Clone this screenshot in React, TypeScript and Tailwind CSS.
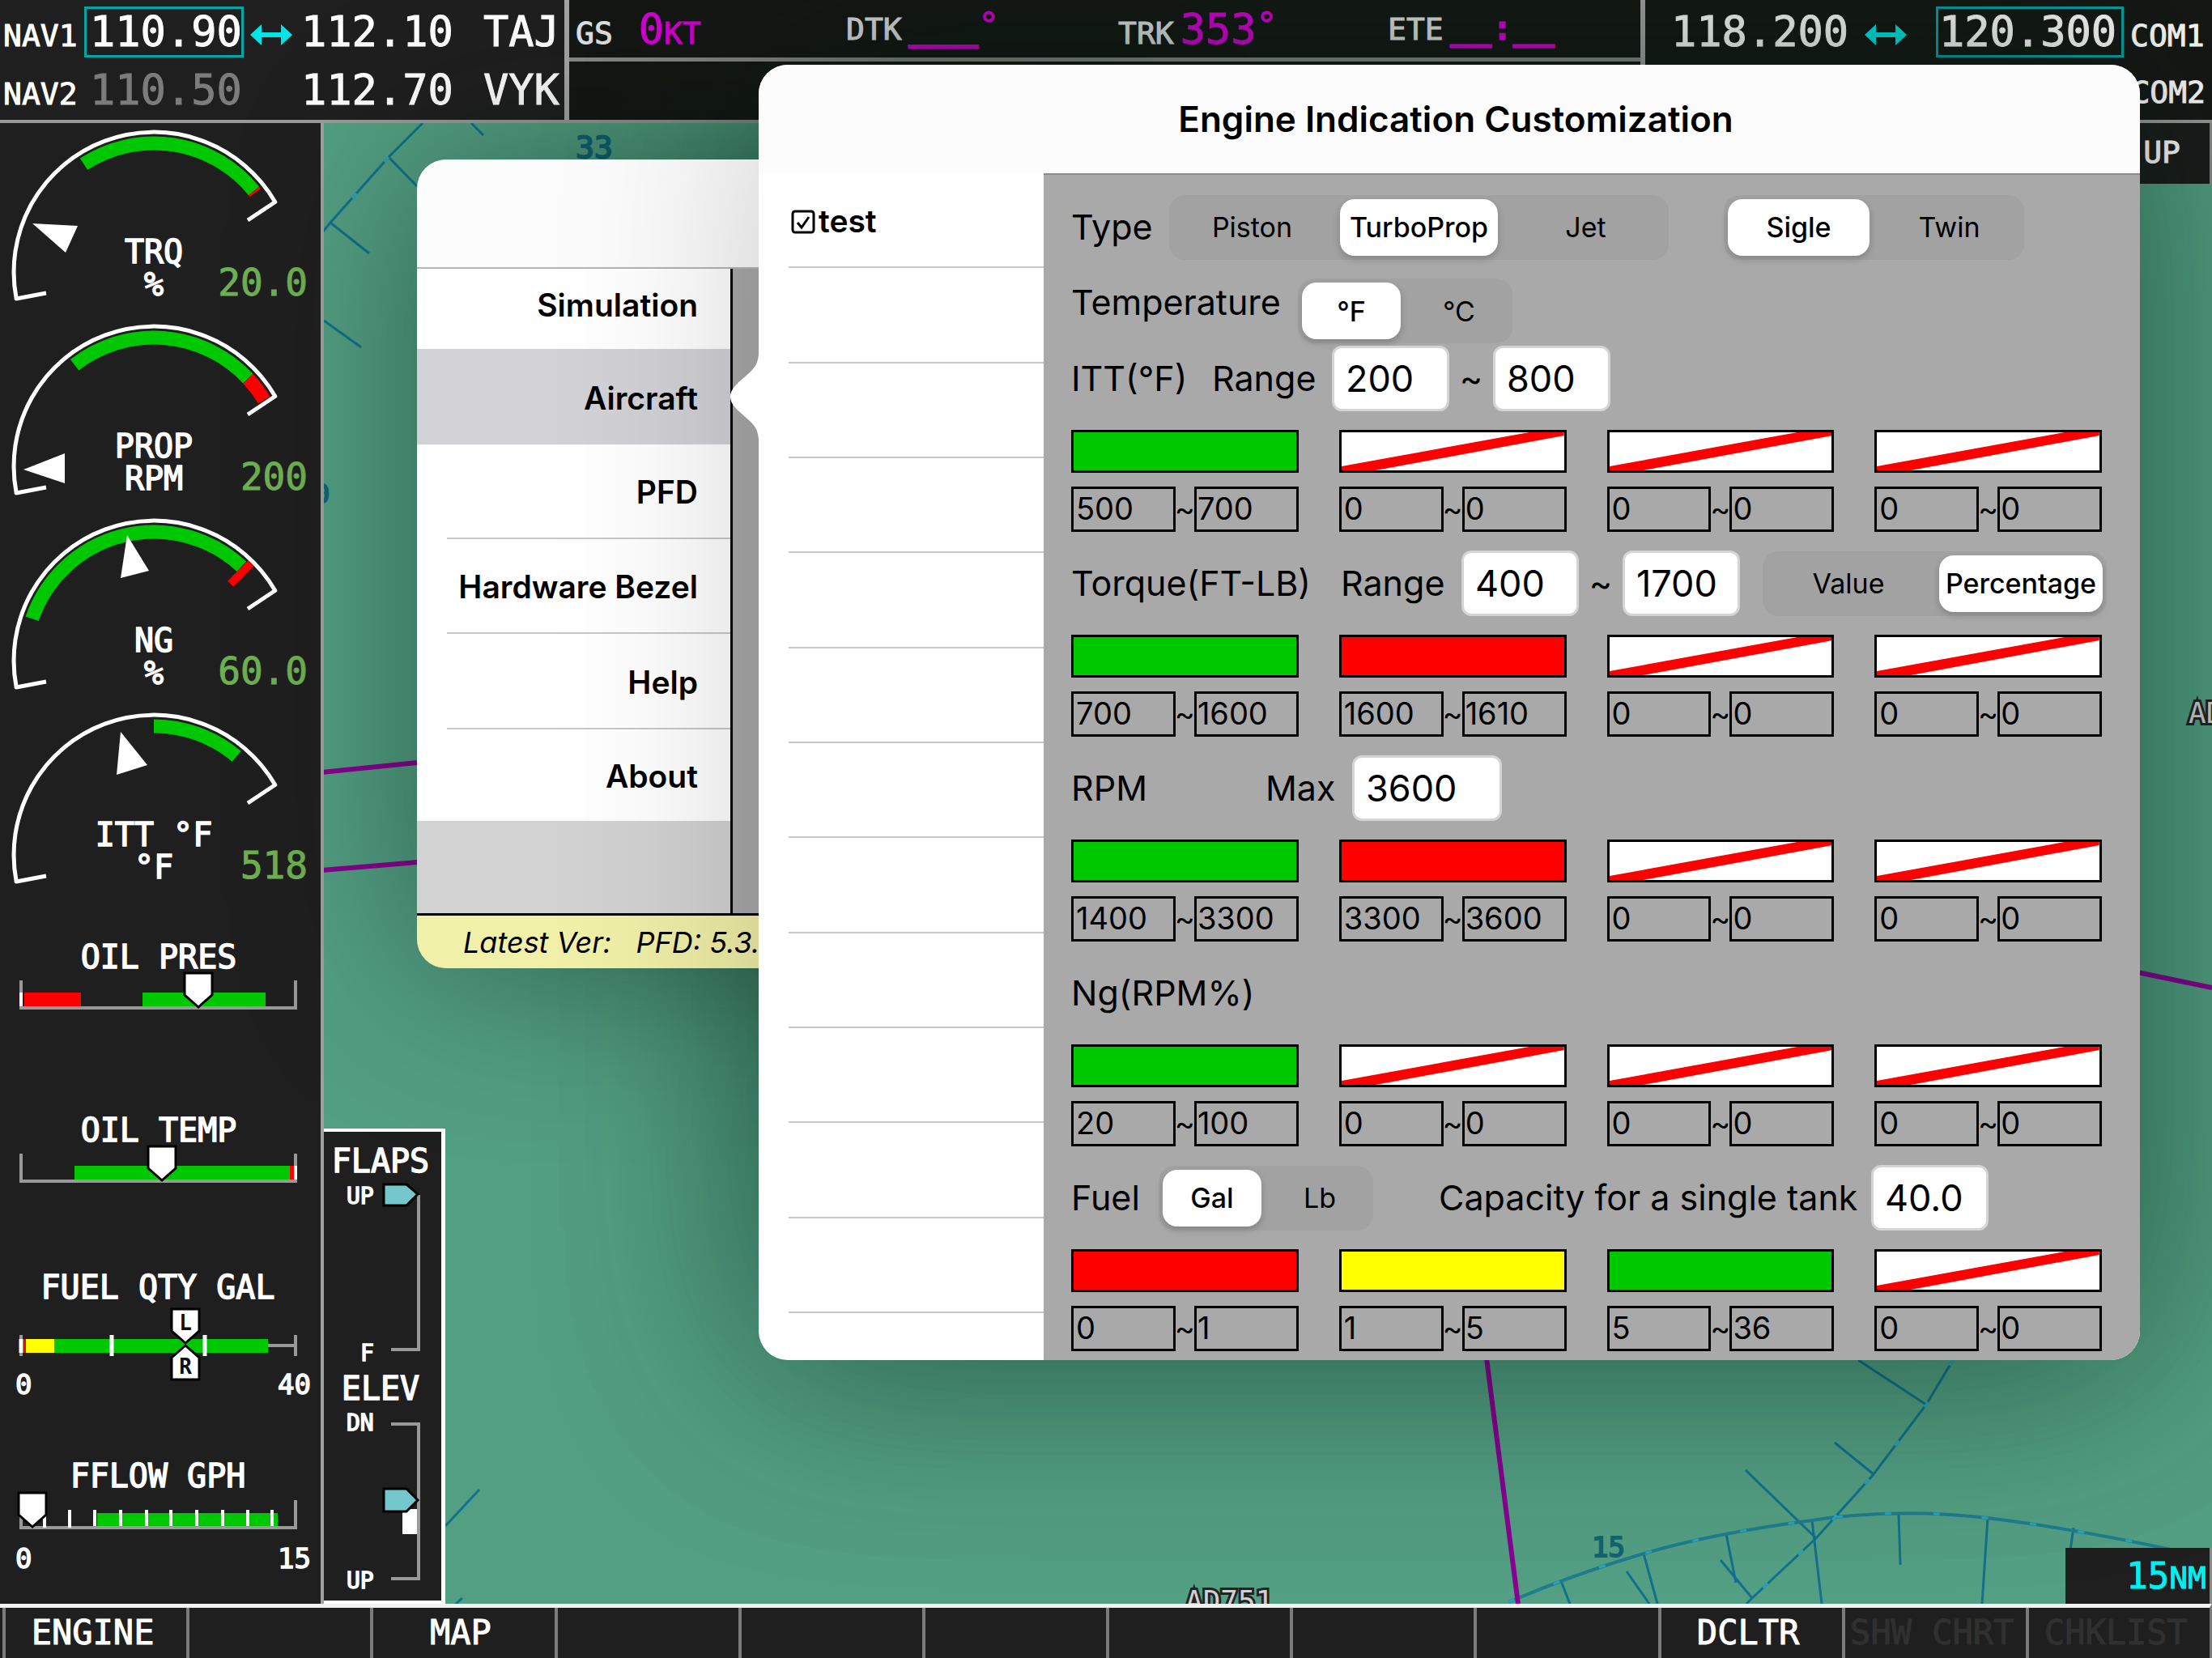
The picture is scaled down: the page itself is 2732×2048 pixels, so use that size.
import { useState } from 'react';
import type { ReactNode } from 'react';
import clsx from 'clsx';

type Swatch = 'green' | 'red' | 'yellow' | 'none';

interface RangeBand {
    color: Swatch;
    from: string;
    to: string;
}

interface Band {
    from: number;
    to: number;
    color: string;
}

const GREEN = '#00c800';
const RED = '#ff0000';
const YELLOW = '#ffff00';

const NONE: RangeBand = { color: 'none', from: '0', to: '0' };

const ITT_BANDS: RangeBand[] = [{ color: 'green', from: '500', to: '700' }, NONE, NONE, NONE];
const TORQUE_BANDS: RangeBand[] = [
    { color: 'green', from: '700', to: '1600' },
    { color: 'red', from: '1600', to: '1610' },
    NONE,
    NONE,
];
const RPM_BANDS: RangeBand[] = [
    { color: 'green', from: '1400', to: '3300' },
    { color: 'red', from: '3300', to: '3600' },
    NONE,
    NONE,
];
const NG_BANDS: RangeBand[] = [{ color: 'green', from: '20', to: '100' }, NONE, NONE, NONE];
const FUEL_BANDS: RangeBand[] = [
    { color: 'red', from: '0', to: '1' },
    { color: 'yellow', from: '1', to: '5' },
    { color: 'green', from: '5', to: '36' },
    NONE,
];

const SOFTKEYS = [
    { label: 'ENGINE' },
    { label: '' },
    { label: 'MAP' },
    { label: '' },
    { label: '' },
    { label: '' },
    { label: '' },
    { label: '' },
    { label: '' },
    { label: 'DCLTR' },
    { label: 'SHW CHRT', disabled: true },
    { label: 'CHKLIST', disabled: true },
];

const MENU = ['Simulation', 'Aircraft', 'PFD', 'Hardware Bezel', 'Help', 'About'];

export default function App() {
    return (
        <div className="relative flex min-h-screen w-full flex-col overflow-hidden bg-[#1f1f1f] font-['DejaVu_Sans_Mono',monospace] text-white">
            <TopBar />
            <main className="flex flex-1">
                <EngineStrip />
                <MapArea />
            </main>
            <SoftkeyBar />
            {/* soft shade the dialog casts on the map, kept under the menu */}
            <div className="pointer-events-none absolute top-20 right-[89px] left-[937px] h-[1600px] rounded-[36px] shadow-[0_0_280px_rgba(0,40,25,0.4)]" />
            <SettingsMenu />
            <CustomizationPopover />
        </div>
    );
}

/* ---------- top bar ---------- */

function SwapArrow() {
    return (
        <svg viewBox="0 0 52 28" className="h-7 w-[52px] shrink-0 self-center" aria-hidden="true">
            <path d="M10 14H42" stroke="#00e5e5" strokeWidth="6" />
            <path d="M0 14L14 1V27ZM52 14L38 1V27Z" fill="#00e5e5" />
        </svg>
    );
}

function TopBar() {
    return (
        <header className="flex h-[152px] border-b-4 border-[#9a9a9a] text-[52px] [-webkit-text-stroke:1px_currentColor]">
            <div className="flex w-[703px] shrink-0 flex-col border-r-6 border-[#a6a6a6] pt-2">
                <div className="flex h-[69px] items-baseline leading-[57px]">
                    <span className="w-[104px] pl-1 text-[38px]">NAV1</span>
                    <span className="w-[197px] border-3 border-[#00a5a8] pl-1">110.90</span>
                    <span className="flex w-[67px] justify-center self-center">
                        <SwapArrow />
                    </span>
                    <span className="w-[229px] pl-1">112.10</span>
                    <span>TAJ</span>
                </div>
                <div className="flex h-[69px] items-baseline leading-[69px]">
                    <span className="w-[104px] pl-1 text-[38px]">NAV2</span>
                    <span className="w-[264px] pl-[7px] text-[#7c7c7c]">110.50</span>
                    <span className="w-[229px] pl-1">112.70</span>
                    <span>VYK</span>
                </div>
            </div>
            <div className="flex-1 bg-[#161815]">
                <div className="grid h-[76px] grid-cols-[334px_336px_333px_1fr] border-b-5 border-[#8a8a8a] pt-2 pl-2">
                    <Readout label="GS">
                        <span className="ml-6">0</span>
                        <span className="text-[38px]">KT</span>
                    </Readout>
                    <Readout label="DTK">
                        <span className="self-start text-[48px] leading-[48px] font-bold">___</span>
                        <span className="self-start text-[43px] leading-[46px]">°</span>
                    </Readout>
                    <Readout label="TRK">
                        <span>353</span>
                        <span className="self-start text-[43px] leading-[46px]">°</span>
                    </Readout>
                    <Readout label="ETE">
                        <span className="self-start text-[43px] leading-[48px] font-bold">__:__</span>
                    </Readout>
                </div>
            </div>
            <div className="w-[706px] shrink-0 border-l-6 border-[#a6a6a6] bg-[#161815] pt-2 pl-8">
                <div className="flex h-[69px] items-baseline leading-[57px]">
                    <span className="w-[239px]">118.200</span>
                    <span className="flex w-[88px] self-center">
                        <SwapArrow />
                    </span>
                    <span className="w-[232px] border-3 border-[#00a5a8] pl-px">120.300</span>
                    <span className="pl-2 text-[38px]">COM1</span>
                </div>
                <div className="pr-2 text-right text-[38px] leading-[75px]">COM2</div>
            </div>
        </header>
    );
}

function Readout({ label, children }: { label: string; children: ReactNode }) {
    return (
        <div className="flex items-baseline leading-[57px] whitespace-nowrap">
            <span className="pr-2 text-[38px] text-[#e4e4e4]">{label}</span>
            <span className="flex items-baseline text-[#d800d8]">{children}</span>
        </div>
    );
}

/* ---------- engine strip ---------- */

const CX = 190;
const CY = 184;

function polar(r: number, deg: number) {
    const a = (deg * Math.PI) / 180;
    return `${(CX + r * Math.sin(a)).toFixed(1)} ${(CY - r * Math.cos(a)).toFixed(1)}`;
}

function arc(r: number, from: number, to: number) {
    return `M${polar(r, from)}A${r} ${r} 0 ${to - from > 180 ? 1 : 0} 1 ${polar(r, to)}`;
}

interface DialProps {
    lines: [string, string];
    value: string;
    bands: Band[];
    needle: string;
    redTick?: number;
}

function Dial({ lines, value, bands, needle, redTick }: DialProps) {
    return (
        <svg viewBox="0 0 396 240" className="h-[240px] w-full shrink-0" role="img" aria-label={lines[0]}>
            {bands.map((b) => (
                <path key={b.from} d={arc(159, b.from, b.to)} fill="none" stroke={b.color} strokeWidth="17" />
            ))}
            {redTick !== undefined && (
                <path d={`M${polar(134, redTick)}L${polar(170, redTick)}`} stroke={RED} strokeWidth="10" />
            )}
            <path
                d={`M57 210L20 217${arc(173, -101, 60).replace('M', 'L')}L306 120`}
                fill="none"
                stroke="#fff"
                strokeWidth="5"
                strokeLinejoin="round"
            />
            <polygon points={needle} fill="#fff" />
            <Label x={190} y={173} anchor="middle">
                {lines[0]}
            </Label>
            <Label x={190} y={213} anchor="middle">
                {lines[1]}
            </Label>
            <text x="380" y="213" textAnchor="end" fontSize="46" fill="#6fb052" stroke="#6fb052" strokeWidth="1">
                {value}
            </text>
        </svg>
    );
}

interface LabelProps {
    x: number;
    y: number;
    size?: number;
    anchor?: 'start' | 'middle' | 'end';
    children: string;
}

function Label({ x, y, size = 40, anchor = 'start', children }: LabelProps) {
    return (
        <text x={x} y={y} textAnchor={anchor} fontSize={size} fill="#fff" stroke="#fff" strokeWidth="1.5">
            {children}
        </text>
    );
}

function Pointer({ x, y, flip, label }: { x: number; y: number; flip?: boolean; label?: string }) {
    const s = flip ? -1 : 1;
    return (
        <g>
            <path
                d={`M${x} ${y}L${x - 17} ${y - 15 * s}V${y - 42 * s}H${x + 17}V${y - 15 * s}Z`}
                fill="#fff"
                stroke="#000"
                strokeWidth="3"
            />
            {label && (
                <text x={x} y={flip ? y + 35 : y - 16} textAnchor="middle" fontSize="26" fontWeight="bold" fill="#111">
                    {label}
                </text>
            )}
        </g>
    );
}

const FRAME = 'M26 99V133H365V99';

function EngineStrip() {
    return (
        <aside className="flex w-[400px] shrink-0 flex-col border-r-4 border-[#a0a0a0] bg-[#1f1f1f]">
            <Dial
                lines={['TRQ', '%']}
                value="20.0"
                bands={[
                    { from: -33, to: 51, color: GREEN },
                    { from: 51, to: 52, color: RED },
                ]}
                needle="40,124 96,127 81,160"
            />
            <Dial
                lines={['PROP', 'RPM']}
                value="200"
                bands={[
                    { from: -38, to: 47, color: GREEN },
                    { from: 47, to: 59, color: RED },
                ]}
                needle="29,188 80,168 80,205"
            />
            <Dial
                lines={['NG', '%']}
                value="60.0"
                bands={[{ from: -71, to: 43, color: GREEN }]}
                redTick={45}
                needle="157,29 149,82 184,73"
            />
            <Dial
                lines={['ITT °F', '°F']}
                value="518"
                bands={[{ from: 0, to: 40, color: GREEN }]}
                needle="149,32 144,85 182,73"
            />

            <svg viewBox="0 0 396 214" className="h-[214px] w-full shrink-0" role="img" aria-label="Oil pressure">
                <Label x={196} y={84} anchor="middle">
                    OIL PRES
                </Label>
                <path d="M30 114H100V131H30Z" fill={RED} />
                <path d="M176 114H328V131H176Z" fill={GREEN} />
                <path d={FRAME} fill="none" stroke="#999" strokeWidth="4" />
                <path d="M26 114V131" stroke="#fff" strokeWidth="4" />
                <Pointer x={245} y={132} />
            </svg>
            <svg viewBox="0 0 396 214" className="h-[214px] w-full shrink-0" role="img" aria-label="Oil temperature">
                <Label x={196} y={84} anchor="middle">
                    OIL TEMP
                </Label>
                <path d="M92 114H358V131H92Z" fill={GREEN} />
                <path d="M358 114H363V131H358Z" fill={RED} />
                <path d={FRAME} fill="none" stroke="#999" strokeWidth="4" />
                <path d="M365 114V131" stroke="#fff" strokeWidth="4" />
                <Pointer x={200} y={132} />
            </svg>
            <svg viewBox="0 0 396 214" className="h-[214px] w-full shrink-0" role="img" aria-label="Fuel quantity">
                <Label x={195} y={64} anchor="middle">
                    FUEL QTY GAL
                </Label>
                <path d="M30 122H365M26 109V135M365 109V135" stroke="#999" strokeWidth="4" />
                <path d="M29 114H33V131H29Z" fill={RED} />
                <path d="M32 114H67V131H32Z" fill={YELLOW} />
                <path d="M67 114H331V131H67Z" fill={GREEN} />
                <path d="M26 114V131M138 109V135M253 109V135" stroke="#fff" strokeWidth="5" />
                <Pointer x={229} y={119} label="L" />
                <Pointer x={229} y={122} flip label="R" />
                <Label x={19} y={182} size={34}>
                    0
                </Label>
                <Label x={384} y={182} size={34} anchor="end">
                    40
                </Label>
            </svg>
            <svg viewBox="0 0 396 227" className="h-[227px] w-full shrink-0" role="img" aria-label="Fuel flow">
                <Label x={195} y={83} anchor="middle">
                    FFLOW GPH
                </Label>
                <path d="M120 115H343V132H120Z" fill={GREEN} />
                <path d={FRAME} fill="none" stroke="#999" strokeWidth="4" />
                <path
                    d="M55 111V133M86 111V133M117 111V131M149 111V131M181 111V131M211 111V131M243 111V131M275 111V131M306 111V131M336 111V131"
                    stroke="#fff"
                    strokeWidth="4"
                />
                <Pointer x={40} y={132} />
                <Label x={19} y={183} size={34}>
                    0
                </Label>
                <Label x={384} y={183} size={34} anchor="end">
                    15
                </Label>
            </svg>
        </aside>
    );
}

/* ---------- map ---------- */

function FlapsPanel() {
    return (
        <div className="relative h-[587px] w-[150px] self-end border-y-4 border-r-5 border-white bg-[#1f1f1f]">
            <svg viewBox="0 4 145 579" className="size-full" role="img" aria-label="Flaps and elevator trim">
                <Label x={70} y={54} anchor="middle">
                    FLAPS
                </Label>
                <Label x={28} y={93} size={28}>
                    UP
                </Label>
                <path d="M83 273H117V82" fill="none" stroke="#999" strokeWidth="4" />
                <path d="M74 69H102L116 81L102 95H74Z" fill="#74c8cc" stroke="#000" strokeWidth="3" />
                <Label x={45} y={287} size={28}>
                    F
                </Label>
                <Label x={70} y={335} anchor="middle">
                    ELEV
                </Label>
                <Label x={28} y={373} size={28}>
                    DN
                </Label>
                <path d="M83 365H117V556H83" fill="none" stroke="#999" strokeWidth="4" />
                <path d="M97 470H115V501H97Z" fill="#fff" />
                <path d="M74 445H102L116 459L102 473H74Z" fill="#74c8cc" stroke="#000" strokeWidth="3" />
                <Label x={28} y={568} size={28}>
                    UP
                </Label>
            </svg>
        </div>
    );
}

function MapArea() {
    return (
        <section className="relative flex flex-1 justify-between bg-[#539f83]" aria-label="Map">
            <svg
                viewBox="400 152 2332 1829"
                preserveAspectRatio="xMinYMax slice"
                className="absolute inset-0 size-full"
                aria-hidden="true"
            >
                <g stroke="#14708c" strokeWidth="3" fill="none">
                    <path d="M522 152L480 194L408 275L399 286" />
                    <path d="M480 194L515 230M408 275L456 313M582 152L597 167M400 396L446 429" />
                    <path d="M592 1840L550 1885M571 1974L560 1984" />
                    <path d="M2412 1680L2379 1735L2314 1821L2243 1900L2164 1974L2157 1981" />
                    <path d="M2379 1735L2295 1680M2314 1821L2266 1782M2243 1900L2156 1816M2164 1974L2125 1927M2037 1981L2009 1941" />
                    <path d="M1939 1981L1928 1953M2047 1981L2030 1919M2144 1955L2132 1895M2250 1981L2238 1878M2347 1933L2345 1871M2448 1981L2455 1875M2557 1915L2561 1887" />
                    <path
                        d="M1863 1979Q1945 1944 2030 1919T2238 1878Q2345 1862 2454 1875T2700 1918"
                        stroke="#1f7d8f"
                        strokeWidth="4"
                    />
                </g>
                <g stroke="#2aa5c0" strokeWidth="3" strokeDasharray="8 52" fill="none">
                    <path d="M480 194L408 275M2412 1680L2379 1735L2314 1821L2243 1900L2164 1974" />
                    <path d="M1863 1979Q1945 1944 2030 1919T2238 1878Q2345 1862 2454 1875T2700 1918" />
                </g>
                <g stroke="#8a0092" strokeWidth="6">
                    <path d="M398 954L515 942M398 1075L515 1065M2640 1201L2732 1220M1836 1678L1875 1981" />
                </g>
                <g fill="#146476" stroke="#146476" strokeWidth="2">
                    <text x="711" y="195" fontSize="38">
                        33
                    </text>
                    <text x="388" y="621" fontSize="32">
                        0
                    </text>
                    <text x="1966" y="1923" fontSize="34">
                        15
                    </text>
                </g>
                <g fontSize="36" fill="#d0d0d0" stroke="#222" strokeWidth="6" paintOrder="stroke">
                    <text x="2703" y="893">
                        AD
                    </text>
                    <text x="1464" y="1990">
                        AD751
                    </text>
                </g>
            </svg>
            <FlapsPanel />
            <div className="relative flex flex-col items-end justify-between">
                <div className="h-[75px] w-[140px] border-r-3 border-[#8a8a8a] bg-[#1b1c1b] pr-9 text-right text-[38px] leading-[72px] [-webkit-text-stroke:1px_currentColor]">
                    UP
                </div>
                <div className="h-[69px] w-[181px] border-r-3 border-[#8a8a8a] bg-[#1f1f1f] pr-1 text-right text-[44px] leading-[69px] text-[#00f0f0] [-webkit-text-stroke:1px_currentColor]">
                    15<span className="text-[38px]">NM</span>
                </div>
            </div>
        </section>
    );
}

function SoftkeyBar() {
    return (
        <nav className="relative grid h-[67px] grid-cols-12 border-t-5 border-r-3 border-t-[#f2f2f2] border-r-[#7b7b7b] bg-[#1f1f1f] pl-[3px]">
            {SOFTKEYS.map((k, i) => (
                <button
                    key={i}
                    type="button"
                    disabled={k.disabled}
                    aria-label={k.label || `Softkey ${i + 1}`}
                    className={clsx(
                        'min-w-0 border-l-4 border-[#7b7b7b] pr-2 text-[42px] leading-none whitespace-nowrap [-webkit-text-stroke:1px_currentColor]',
                        k.disabled ? 'text-[#303030]' : 'text-white',
                    )}
                >
                    {k.label}
                </button>
            ))}
        </nav>
    );
}

/* ---------- settings menu ---------- */

function SettingsMenu() {
    return (
        <div className="absolute top-[197px] left-[515px] flex h-[999px] w-[860px] flex-col overflow-hidden rounded-[36px] bg-[#a9a9a9] font-[Inter,sans-serif] text-black shadow-[0_0_220px_rgba(0,20,12,0.45)]">
            <div className="h-[135px] border-b-2 border-[#b5b5b5] bg-[#fdfcfc]" />
            <div className="flex flex-1">
                <nav className="grid w-[390px] grid-rows-[99px_118px_117px_117px_118px_113px_1fr] border-r-3 border-black bg-[#d2d2d2]">
                    {MENU.map((item, i) => (
                        <button
                            key={item}
                            type="button"
                            className={clsx(
                                'flex pl-[37px] text-[39px] font-semibold',
                                i === 0 && 'pb-3',
                                item === 'Aircraft' ? 'bg-[#d1d1d6]' : 'bg-white',
                            )}
                        >
                            <span
                                className={clsx(
                                    'flex h-full flex-1 items-center justify-end pt-1 pr-10 whitespace-nowrap',
                                    i > 1 && i < 5 && 'border-b-2 border-[#c8c8c8]',
                                )}
                            >
                                {item}
                            </span>
                        </button>
                    ))}
                </nav>
            </div>
            <footer className="flex h-[68px] items-center border-t-3 border-black bg-[#f1f0a8] pl-[57px] text-[36px] whitespace-pre italic">
                {'Latest Ver:   PFD: 5.3.'}
            </footer>
        </div>
    );
}

/* ---------- engine customization ---------- */

interface SegmentedProps {
    label: string;
    options: string[];
    initial: string;
    className: string;
}

function Segmented({ label, options, initial, className }: SegmentedProps) {
    const [selected, setSelected] = useState(initial);
    return (
        <div
            role="group"
            aria-label={label}
            className={clsx(
                'grid h-20 auto-cols-fr grid-flow-col gap-[11px] rounded-[20px] bg-[#a2a2a2] p-[5px]',
                className,
            )}
        >
            {options.map((o) => (
                <button
                    key={o}
                    type="button"
                    aria-pressed={o === selected}
                    onClick={() => setSelected(o)}
                    className={clsx(
                        'flex min-w-0 items-center justify-center rounded-[18px] text-[34px] whitespace-nowrap',
                        o === selected && 'bg-white font-medium shadow-[0_4px_10px_rgba(0,0,0,0.2)]',
                    )}
                >
                    {o}
                </button>
            ))}
        </div>
    );
}

function BigInput({ label, value, className }: { label: string; value: string; className: string }) {
    return (
        <input
            aria-label={label}
            defaultValue={value}
            className={clsx('h-[81px] rounded-xl border-3 border-[#d4d4d4] bg-white pl-[14px] text-[45px]', className)}
        />
    );
}

function BandEditor({ name, bands }: { name: string; bands: RangeBand[] }) {
    return (
        <div className="mt-[23px] mb-6 grid grid-cols-4 gap-x-[50px]">
            {bands.map((b, i) => (
                <div key={i} className="flex flex-col gap-4">
                    <button
                        type="button"
                        aria-label={`${name} band ${i + 1} color`}
                        className={clsx(
                            'block h-[53px] w-full border-3 border-black',
                            b.color === 'green' && 'bg-[#00c800]',
                            b.color === 'red' && 'bg-[#ff0000]',
                            b.color === 'yellow' && 'bg-[#ffff00]',
                            b.color === 'none' && 'bg-white',
                        )}
                    >
                        {b.color === 'none' && (
                            <svg viewBox="0 0 275 47" preserveAspectRatio="none" className="size-full" aria-hidden="true">
                                <path d="M0 47V42L232 0H275V4L42 47Z" fill="#f00" />
                            </svg>
                        )}
                    </button>
                    <div className="grid h-14 grid-cols-[1fr_23px_1fr] items-center">
                        <input
                            aria-label={`${name} band ${i + 1} from`}
                            defaultValue={b.from}
                            className="h-14 w-full min-w-0 border-3 border-black bg-transparent pl-[3px] text-[38px]"
                        />
                        <span className="flex justify-center text-[38px]">~</span>
                        <input
                            aria-label={`${name} band ${i + 1} to`}
                            defaultValue={b.to}
                            className="h-14 w-full min-w-0 border-3 border-black bg-transparent pl-px text-[38px]"
                        />
                    </div>
                </div>
            ))}
        </div>
    );
}

function Row({ children }: { children: ReactNode }) {
    return <div className="flex h-[81px] items-center whitespace-nowrap [&>*]:shrink-0">{children}</div>;
}

function CustomizationPopover() {
    return (
        <div className="absolute top-20 right-[89px] left-[937px] rounded-[36px] font-[Inter,sans-serif] text-black shadow-[0_0_280px_rgba(0,0,0,0.2)]">
            <svg viewBox="0 0 36 132" className="absolute top-[344px] -left-[35px] h-[132px] w-9" aria-hidden="true">
                <path
                    d="M36 0V132C35 112 34 106 26 98C14 86 0 78 0 66C0 54 14 46 26 34C34 26 35 20 36 0Z"
                    fill="#fff"
                />
            </svg>
            <div className="relative overflow-hidden rounded-[36px] bg-white" role="dialog" aria-labelledby="dlg-title">
                <h1
                    id="dlg-title"
                    className="flex h-[134px] items-center justify-center bg-[#fcfcfc] pl-4 text-[44px] font-semibold"
                >
                    Engine Indication Customization
                </h1>
                <div className="flex h-[1466px]">
                    <ul className="grid h-[1408px] w-[352px] shrink-0 grid-rows-12 bg-white pl-[37px]">
                        <li className="flex items-center border-b-2 border-[#c8c8c8] pt-1 pl-[3px]">
                            <label className="flex items-center gap-1 text-[39px] font-semibold">
                                <input type="checkbox" defaultChecked className="sr-only" />
                                <svg viewBox="0 0 30 30" className="size-[30px]" aria-hidden="true">
                                    <rect x="2" y="2" width="26" height="26" rx="3" fill="none" stroke="#000" strokeWidth="3" />
                                    <path d="M8 16L13 22L22 9" fill="none" stroke="#000" strokeWidth="3" />
                                </svg>
                                test
                            </label>
                        </li>
                        {Array.from({ length: 11 }, (_, i) => (
                            <li key={i} className="border-b-2 border-[#c8c8c8]" />
                        ))}
                    </ul>
                    <form className="min-w-0 flex-1 border-t-2 border-[#8c8c8c] bg-[#a9a9a9] pt-6 pr-[47px] pl-[34px] text-[43px]">
                        <Row>
                            <span className="w-[121px]">Type</span>
                            <Segmented
                                label="Type"
                                options={['Piston', 'TurboProp', 'Jet']}
                                initial="TurboProp"
                                className="w-[617px]"
                            />
                            <span className="w-[68px]" />
                            <Segmented label="Engines" options={['Sigle', 'Twin']} initial="Sigle" className="w-[371px]" />
                        </Row>
                        <div className="mt-[23px] flex h-[83px] items-start whitespace-nowrap">
                            <span className="w-[280px] leading-[58px]">Temperature</span>
                            <Segmented label="Temperature" options={['°F', '°C']} initial="°F" className="w-[265px]" />
                        </div>
                        <Row>
                            <span className="w-[174px]">ITT(°F)</span>
                            <span className="w-[148px]">Range</span>
                            <BigInput label="ITT range from" value="200" className="w-[145px]" />
                            <span className="flex w-[54px] justify-center">~</span>
                            <BigInput label="ITT range to" value="800" className="w-[145px]" />
                        </Row>
                        <BandEditor name="ITT" bands={ITT_BANDS} />
                        <Row>
                            <span className="w-[333px]">Torque(FT-LB)</span>
                            <span className="w-[149px]">Range</span>
                            <BigInput label="Torque range from" value="400" className="w-[145px]" />
                            <span className="flex w-[54px] justify-center">~</span>
                            <BigInput label="Torque range to" value="1700" className="w-[145px]" />
                            <span className="w-7" />
                            <Segmented
                                label="Torque unit"
                                options={['Value', 'Percentage']}
                                initial="Percentage"
                                className="w-[425px]"
                            />
                        </Row>
                        <BandEditor name="Torque" bands={TORQUE_BANDS} />
                        <Row>
                            <span className="w-[240px]">RPM</span>
                            <span className="w-[107px]">Max</span>
                            <BigInput label="RPM max" value="3600" className="w-[185px]" />
                        </Row>
                        <BandEditor name="RPM" bands={RPM_BANDS} />
                        <Row>
                            <span>Ng(RPM%)</span>
                        </Row>
                        <BandEditor name="Ng" bands={NG_BANDS} />
                        <Row>
                            <span className="w-[108px]">Fuel</span>
                            <Segmented label="Fuel unit" options={['Gal', 'Lb']} initial="Gal" className="w-[265px]" />
                            <label className="flex items-center pl-[81px]">
                                <span className="w-[534px]">Capacity for a single tank</span>
                                <BigInput label="Capacity for a single tank" value="40.0" className="w-[145px]" />
                            </label>
                        </Row>
                        <BandEditor name="Fuel" bands={FUEL_BANDS} />
                    </form>
                </div>
            </div>
        </div>
    );
}
